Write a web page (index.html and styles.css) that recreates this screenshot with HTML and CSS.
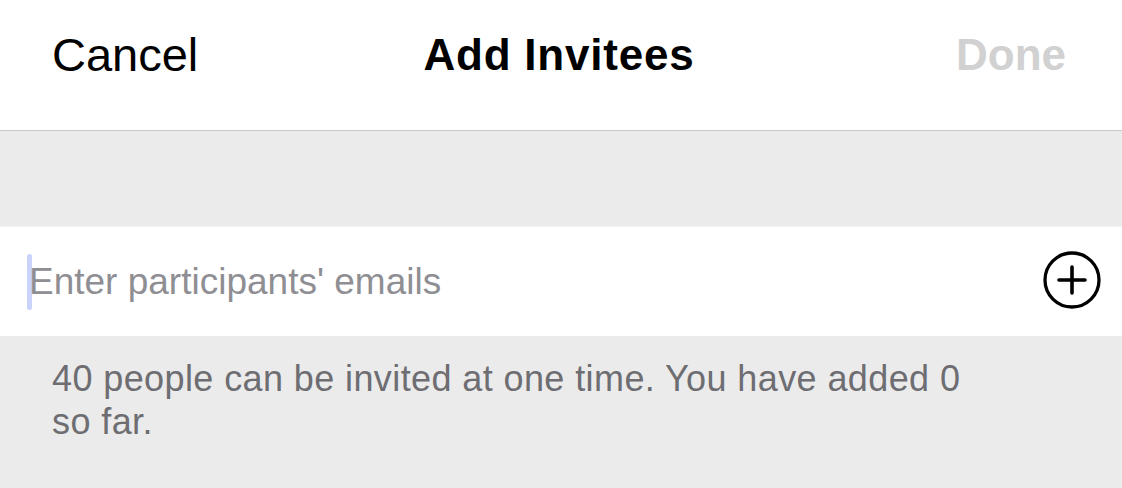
FILE: index.html
```html
<!DOCTYPE html>
<html lang="en">
<head>
  <meta charset="UTF-8">
  <meta name="viewport" content="width=device-width, initial-scale=1.0">
  <title>Add Invitees</title>
  <link rel="stylesheet" href="styles.css">
</head>
<body>

  <header class="nav">
    <button class="nav-btn cancel">Cancel</button>
    <h1 class="nav-title">Add Invitees</h1>
    <button class="nav-btn done" disabled>Done</button>
  </header>

  <div class="spacer"></div>

  <div class="email-row">
    <span class="caret"></span>
    <input class="email-input" type="email" placeholder="Enter participants' emails">
    <button class="add-btn" aria-label="Add">
      <svg width="60" height="60" viewBox="0 0 60 60">
        <circle cx="30" cy="30" r="27" fill="none" stroke="#000" stroke-width="3.3"/>
        <path d="M30 17v26M17 30h26" stroke="#000" stroke-width="3.6" stroke-linecap="round"/>
      </svg>
    </button>
  </div>

  <p class="hint">40 people can be invited at one time. You have added 0 so far.</p>

</body>
</html>
```

FILE: styles.css
```css
body {
  margin: 0;
  font-family: "Liberation Sans", Arial, sans-serif;
  background-color: #ebebeb;
  color: #000;
}

.nav {
  display: grid;
  grid-template-columns: 1fr auto 1fr;
  align-items: start;
  height: 131px;
  box-sizing: border-box;
  padding: 29px 56px 0 52px;
  background-color: #fff;
  border-bottom: 1px solid #c8c8c8;
}

.nav-btn {
  padding: 0;
  border: none;
  background: none;
  font-family: inherit;
  line-height: 52px;
  cursor: pointer;
}

.cancel {
  justify-self: start;
  font-size: 47px;
  color: #000;
}

.done {
  justify-self: end;
  font-size: 44px;
  font-weight: bold;
  color: #d1d1d1;
}

.nav-title {
  margin: 0;
  font-size: 44px;
  font-weight: bold;
  letter-spacing: 0.8px;
  line-height: 52px;
}

.spacer {
  height: 95px;
}

.email-row {
  display: flex;
  align-items: center;
  height: 110px;
  box-sizing: border-box;
  padding: 0 20px 0 27px;
  background-color: #fff;
  border-top: 1px solid #f3f3f3;
}

.caret {
  flex: none;
  width: 5px;
  height: 56px;
  margin-right: -4px;
  border-radius: 3px;
  background-color: #c9d3fb;
}

.email-input {
  flex: 1;
  min-width: 0;
  padding: 0 0 0 1px;
  border: none;
  outline: none;
  background: none;
  font-family: inherit;
  font-size: 37px;
  color: #000;
}

.email-input::placeholder {
  color: #8e8e93;
}

.add-btn {
  flex: none;
  display: flex;
  padding: 0;
  margin-top: -4px;
  border: none;
  background: none;
  cursor: pointer;
}

.hint {
  margin: 0;
  padding: 21px 130px 0 52px;
  font-size: 36px;
  letter-spacing: 0.4px;
  line-height: 43px;
  color: #6d6d72;
}
```
